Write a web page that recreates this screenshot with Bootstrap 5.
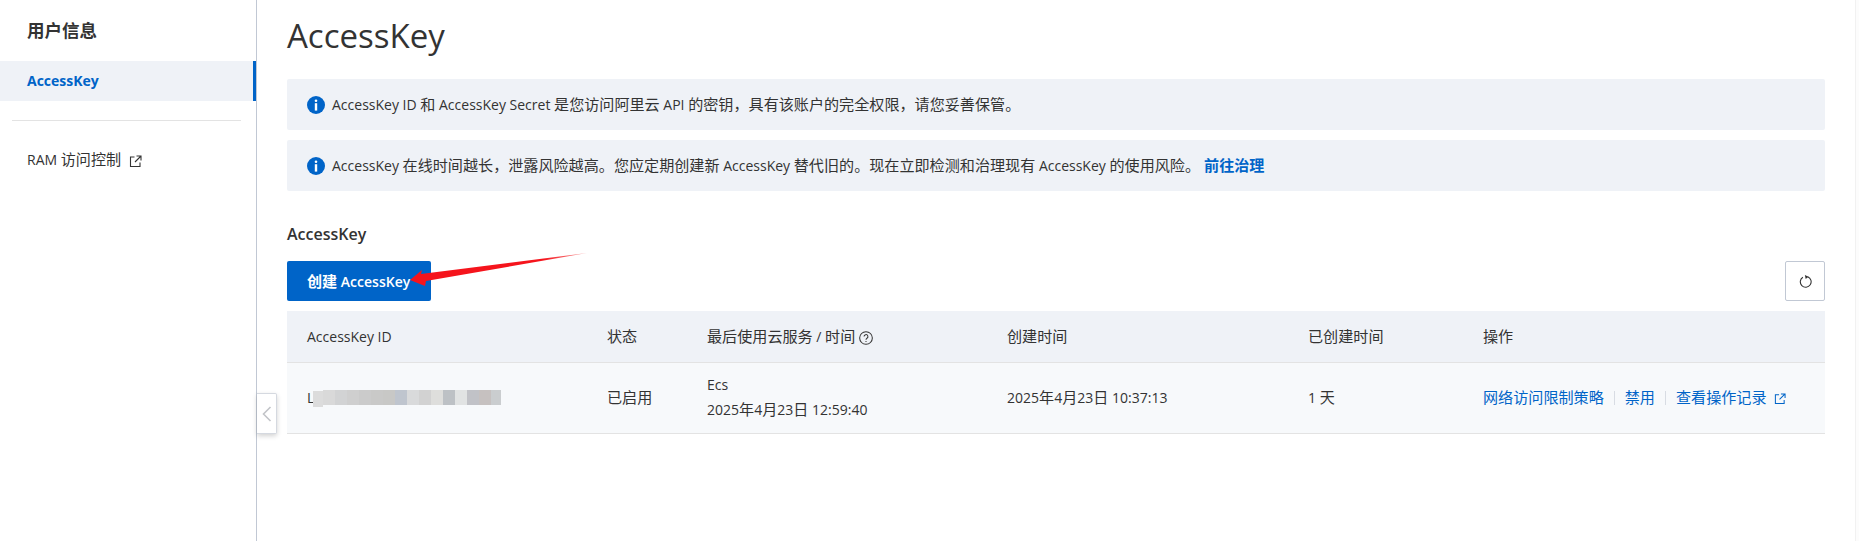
<!DOCTYPE html>
<html lang="zh-CN">
<head>
    <meta charset="UTF-8">
    <meta name="viewport" content="width=device-width, initial-scale=1.0">
    <title>AccessKey</title>
    <link rel="stylesheet" href="https://cdn.jsdelivr.net/npm/bootstrap@5.3.0/dist/css/bootstrap.min.css">
    <style>
        html, body { height: 100%; }
        body {
            font-family: "Open Sans", "Noto Sans CJK SC", sans-serif;
            font-size: 14px;
            color: #333;
            background: #fff;
            overflow: hidden;
        }
        /* the Chinese runs sit a size above the latin text */
        .zh { font-size: 15.1px; }
        .app-shell { height: 541px; position: relative; }
        .side-panel { width: 257px; flex: none; border-right: 1px solid #c1c8d4; }
        .side-title { font-size: 17.5px; font-weight: 700; padding: 19px 27px 0; height: 61px; line-height: 22px; }
        .side-active {
            height: 40px; line-height: 40px; padding-left: 27px; background: #eff2f7;
            color: #0064c8; font-weight: 700; border-right: 3px solid #0064c8;
        }
        .side-rule { margin: 19px 15px 0 12px; border-top: 1px solid #e3e3e3; opacity: 1; }
        .side-link { padding: 28px 0 0 27px; line-height: 20px; color: #333; text-decoration: none; display: block; }
        .main-panel { flex: 1; padding: 0 34px 0 30px; }
        .page-heading { font-size: 33px; font-weight: 400; line-height: 40px; margin: 16px 0 23px; color: #333; }
        .note-box {
            background: #eff2f7; border-radius: 2px; height: 51px; margin-bottom: 10px;
            padding: 0 20px; display: flex; align-items: center; gap: 7px;
        }
        .note-box a { color: #0064c8; font-weight: 700; text-decoration: none; margin-left: 4px; }
        .section-heading { font-size: 16px; font-weight: 600; line-height: 22px; margin: 32px 0 16px; }
        .create-btn {
            background: #0064c8; border: 0; color: #fff; font-weight: 600; font-size: 14px;
            width: 144px; height: 40px; padding: 0 0 0 20px; text-align: left; border-radius: 2px;
        }
        .refresh-btn {
            width: 40px; height: 40px; padding: 0; background: #fff; border: 1px solid #c1c8d4; border-radius: 2px;
            display: flex; align-items: center; justify-content: center;
        }
        .key-table { margin: 10px 0 0; table-layout: fixed; width: 100%; }
        .key-table th, .key-table td { padding: 0 0 0 20px; vertical-align: middle; color: #333; border-color: #e3e3e3; }
        .key-table th { background: #eff2f7; font-weight: 400; height: 51px; }
        .key-table td { background: #f7f9fb; height: 71px; line-height: 24px; }
        .key-table a { color: #0064c8; text-decoration: none; }
        .link-sep { display: inline-block; width: 1px; height: 14px; background: #d8dce3; margin: 0 10px; vertical-align: -2px; }
        .mask-strip { vertical-align: -4px; margin-left: -1px; }
        .collapse-tab {
            position: absolute; left: 257px; top: 393px; width: 20px; height: 41px; background: #fff;
            border: 1px solid #d5d9e0; border-left: 0; border-radius: 0 2px 2px 0;
            box-shadow: 0 2px 5px rgba(0,0,0,.18); display: flex; align-items: center; justify-content: center;
        }
        .red-arrow { position: absolute; left: 400px; top: 245px; pointer-events: none; }
        .scroll-edge { position: absolute; right: 0; top: 0; bottom: 0; width: 4px; background: #fcfcfc; border-left: 1px solid #f1f1f1; }
    </style>
</head>
<body>
    <div class="app-shell d-flex">
        <div class="side-panel">
            <div class="side-title">用户信息</div>
            <div class="side-active">AccessKey</div>
            <hr class="side-rule">
            <a class="side-link" href="#">RAM <span class="zh">访问控制</span>
                <svg class="ms-1" width="13" height="13" viewBox="0 0 13 13" fill="none" stroke="#333" stroke-width="1.1"><path d="M5.5 2H1.5V11.5H11V7.5M7.5 1H12V5.5M12 1L6 7"/></svg>
            </a>
        </div>

        <div class="main-panel">
            <h1 class="page-heading">AccessKey</h1>

            <div class="note-box">
                <svg width="18" height="18" viewBox="0 0 18 18"><circle cx="9" cy="9" r="9" fill="#0064c8"/><rect x="7.7" y="3.4" width="2.6" height="2.6" rx="1.3" fill="#fff"/><rect x="7.8" y="7.2" width="2.4" height="7.4" fill="#fff"/></svg>
                <span>AccessKey ID <span class="zh">和</span> AccessKey Secret <span class="zh">是您访问阿里云</span> API <span class="zh">的密钥，具有该账户的完全权限，请您妥善保管。</span></span>
            </div>
            <div class="note-box">
                <svg width="18" height="18" viewBox="0 0 18 18"><circle cx="9" cy="9" r="9" fill="#0064c8"/><rect x="7.7" y="3.4" width="2.6" height="2.6" rx="1.3" fill="#fff"/><rect x="7.8" y="7.2" width="2.4" height="7.4" fill="#fff"/></svg>
                <span>AccessKey <span class="zh">在线时间越长，泄露风险越高。您应定期创建新</span> AccessKey <span class="zh">替代旧的。现在立即检测和治理现有</span> AccessKey <span class="zh">的使用风险。</span><a href="#" class="zh">前往治理</a></span>
            </div>

            <h2 class="section-heading">AccessKey</h2>
            <div class="d-flex justify-content-between">
                <button class="btn create-btn" type="button"><span class="zh">创建</span> AccessKey</button>
                <button class="btn refresh-btn" type="button" aria-label="刷新">
                    <svg width="13" height="13" viewBox="0 0 12 12" fill="none" stroke="#333" stroke-width="1"><path d="M3.6 2A5 5 0 1 0 8 1.6"/><path d="M5.4 0L8.8 1.5L6.2 3.8Z" fill="#333" stroke="none"/></svg>
                </button>
            </div>

            <table class="table key-table">
                <colgroup>
                    <col style="width:300px"><col style="width:100px"><col style="width:300px"><col style="width:301px"><col style="width:175px"><col>
                </colgroup>
                <thead>
                    <tr>
                        <th>AccessKey ID</th>
                        <th><span class="zh">状态</span></th>
                        <th><span class="zh">最后使用云服务</span> / <span class="zh">时间</span>
                            <svg width="14" height="14" viewBox="0 0 13 13" fill="none" stroke="#333" stroke-width=".95"><circle cx="6.5" cy="6.5" r="5.9"/><path d="M4.7 5.2a1.8 1.8 0 1 1 2.7 1.5c-.6.4-.9.7-.9 1.4"/><path d="M6.5 9.2v1"/></svg>
                        </th>
                        <th><span class="zh">创建时间</span></th>
                        <th><span class="zh">已创建时间</span></th>
                        <th><span class="zh">操作</span></th>
                    </tr>
                </thead>
                <tbody>
                    <tr>
                        <td>L<svg class="mask-strip" width="188" height="17" viewBox="0 0 188 17">
                            <rect x="0" y="1" width="10" height="16" fill="#dcdcdc"/>
                            <rect x="10" y="0" width="12" height="15" fill="#d9d9d9"/><rect x="22" y="0" width="12" height="15" fill="#d2d3d4"/>
                            <rect x="34" y="0" width="12" height="15" fill="#cfcfcf"/><rect x="46" y="0" width="12" height="15" fill="#cbcbcb"/>
                            <rect x="58" y="0" width="12" height="15" fill="#c9c9c8"/><rect x="70" y="0" width="12" height="15" fill="#c8c8c6"/>
                            <rect x="82" y="0" width="12" height="15" fill="#bfc5ce"/><rect x="94" y="0" width="12" height="15" fill="#d9dadb"/>
                            <rect x="106" y="0" width="12" height="15" fill="#d2d2d2"/><rect x="118" y="0" width="12" height="15" fill="#dededc"/>
                            <rect x="130" y="0" width="12" height="15" fill="#bdc1c5"/><rect x="142" y="0" width="12" height="15" fill="#e1e3e3"/>
                            <rect x="154" y="0" width="12" height="15" fill="#c1c2c7"/><rect x="166" y="0" width="12" height="15" fill="#c6c1c0"/>
                            <rect x="178" y="0" width="10" height="15" fill="#cacdcf"/>
                        </svg></td>
                        <td><span class="zh">已启用</span></td>
                        <td>Ecs<br>2025<span class="zh">年</span>4<span class="zh">月</span>23<span class="zh">日</span> 12:59:40</td>
                        <td>2025<span class="zh">年</span>4<span class="zh">月</span>23<span class="zh">日</span> 10:37:13</td>
                        <td>1 <span class="zh">天</span></td>
                        <td class="text-nowrap">
                            <a href="#" class="zh">网络访问限制策略</a><span class="link-sep"></span><a href="#" class="zh">禁用</a><span class="link-sep"></span><a href="#"><span class="zh">查看操作记录</span>
                                <svg class="ms-1" width="12" height="12" viewBox="0 0 13 13" fill="none" stroke="#0064c8" stroke-width="1.1"><path d="M5.5 2H1.5V11.5H11V7.5M7.5 1H12V5.5M12 1L6 7"/></svg>
                            </a>
                        </td>
                    </tr>
                </tbody>
            </table>
        </div>

        <div class="collapse-tab">
            <svg width="10" height="16" viewBox="0 0 10 16" fill="none" stroke="#c2c4c8" stroke-width="1.6"><path d="M8.5 1L1.5 8L8.5 15"/></svg>
        </div>

        <svg class="red-arrow" width="200" height="50" viewBox="0 0 200 50">
            <defs>
                <linearGradient id="arrowFade" x1="10" x2="187" y1="0" y2="0" gradientUnits="userSpaceOnUse">
                    <stop offset="0" stop-color="#f5141c"/>
                    <stop offset=".75" stop-color="#f5141c"/>
                    <stop offset="1" stop-color="#f8a0a0"/>
                </linearGradient>
            </defs>
            <polygon points="10,35 22,25 21,29 187,8 26,36 25,41" fill="url(#arrowFade)"/>
        </svg>
        <div class="scroll-edge"></div>
    </div>

    <script src="https://cdn.jsdelivr.net/npm/bootstrap@5.3.0/dist/js/bootstrap.bundle.min.js"></script>
</body>
</html>
